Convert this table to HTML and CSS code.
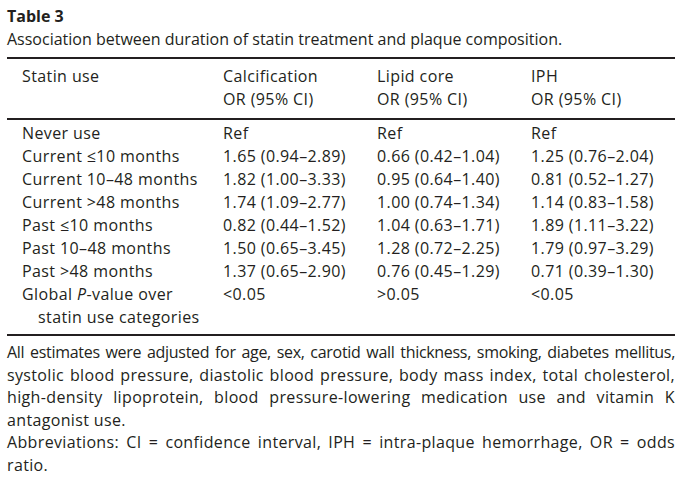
FILE: index.html
```html
<!DOCTYPE html>
<html lang="en">
<head>
<meta charset="utf-8">
<title>Table 3</title>
<link rel="stylesheet" href="styles.css">
</head>
<body>
<div class="figure">
  <div class="label">Table 3</div>
  <div class="caption">Association between duration of statin treatment and plaque composition.</div>
  <div class="table">
    <div class="thead">
      <div class="c first">Statin use</div>
      <div class="c">Calcification<br>OR (95% CI)</div>
      <div class="c">Lipid core<br>OR (95% CI)</div>
      <div class="c">IPH<br>OR (95% CI)</div>
    </div>
    <div class="tbody">
      <div class="c first">Never use</div><div class="c">Ref</div><div class="c">Ref</div><div class="c">Ref</div>
      <div class="c first">Current ≤10 months</div><div class="c">1.65 (0.94–2.89)</div><div class="c">0.66 (0.42–1.04)</div><div class="c">1.25 (0.76–2.04)</div>
      <div class="c first">Current 10–48 months</div><div class="c">1.82 (1.00–3.33)</div><div class="c">0.95 (0.64–1.40)</div><div class="c">0.81 (0.52–1.27)</div>
      <div class="c first">Current &gt;48 months</div><div class="c">1.74 (1.09–2.77)</div><div class="c">1.00 (0.74–1.34)</div><div class="c">1.14 (0.83–1.58)</div>
      <div class="c first">Past ≤10 months</div><div class="c">0.82 (0.44–1.52)</div><div class="c">1.04 (0.63–1.71)</div><div class="c">1.89 (1.11–3.22)</div>
      <div class="c first">Past 10–48 months</div><div class="c">1.50 (0.65–3.45)</div><div class="c">1.28 (0.72–2.25)</div><div class="c">1.79 (0.97–3.29)</div>
      <div class="c first">Past &gt;48 months</div><div class="c">1.37 (0.65–2.90)</div><div class="c">0.76 (0.45–1.29)</div><div class="c">0.71 (0.39–1.30)</div>
      <div class="c first">Global <i>P</i>-value over<br><span class="indent">statin use categories</span></div><div class="c">&lt;0.05</div><div class="c">&gt;0.05</div><div class="c">&lt;0.05</div>
    </div>
  </div>
  <div class="notes">
    <p class="line tight">All estimates were adjusted for age, sex, carotid wall thickness, smoking, diabetes mellitus,</p>
    <p class="line">systolic blood pressure, diastolic blood pressure, body mass index, total cholesterol,</p>
    <p class="line">high-density lipoprotein, blood pressure-lowering medication use and vitamin K</p>
    <p class="line last">antagonist use.</p>
    <p class="line">Abbreviations: CI = confidence interval, IPH = intra-plaque hemorrhage, OR = odds</p>
    <p class="line last">ratio.</p>
  </div>
</div>
</body>
</html>
```
FILE: styles.css
```css
html, body {
  margin: 0;
  padding: 0;
  background: #ffffff;
}
body {
  font-family: "Open Sans", "Noto Sans", sans-serif;
  color: #231f20;
  font-size: 16px;
  line-height: 23px;
}
.figure {
  width: 668px;
  padding: 5px 0 0 7px;
}
.label {
  font-weight: 700;
}
.caption {
  margin-bottom: 6px;
}
.table {
  border-top: 2px solid #231f20;
  border-bottom: 2px solid #231f20;
}
.thead, .tbody {
  display: grid;
  grid-template-columns: 216px 154px 154px 1fr;
  letter-spacing: 0.4px;
}
.thead {
  padding: 6px 0 7px;
  border-bottom: 2px solid #231f20;
}
.tbody {
  padding: 2px 0 5px;
}
.c.first {
  padding-left: 15px;
}
.indent {
  padding-left: 16px;
}
.notes {
  padding-top: 5px;
  line-height: 22.6px;
  letter-spacing: 0.35px;
}
.line {
  margin: 0;
  text-align: justify;
  text-align-last: justify;
}
.line.last {
  text-align-last: left;
}
.tight {
  letter-spacing: -0.3px;
}
```
